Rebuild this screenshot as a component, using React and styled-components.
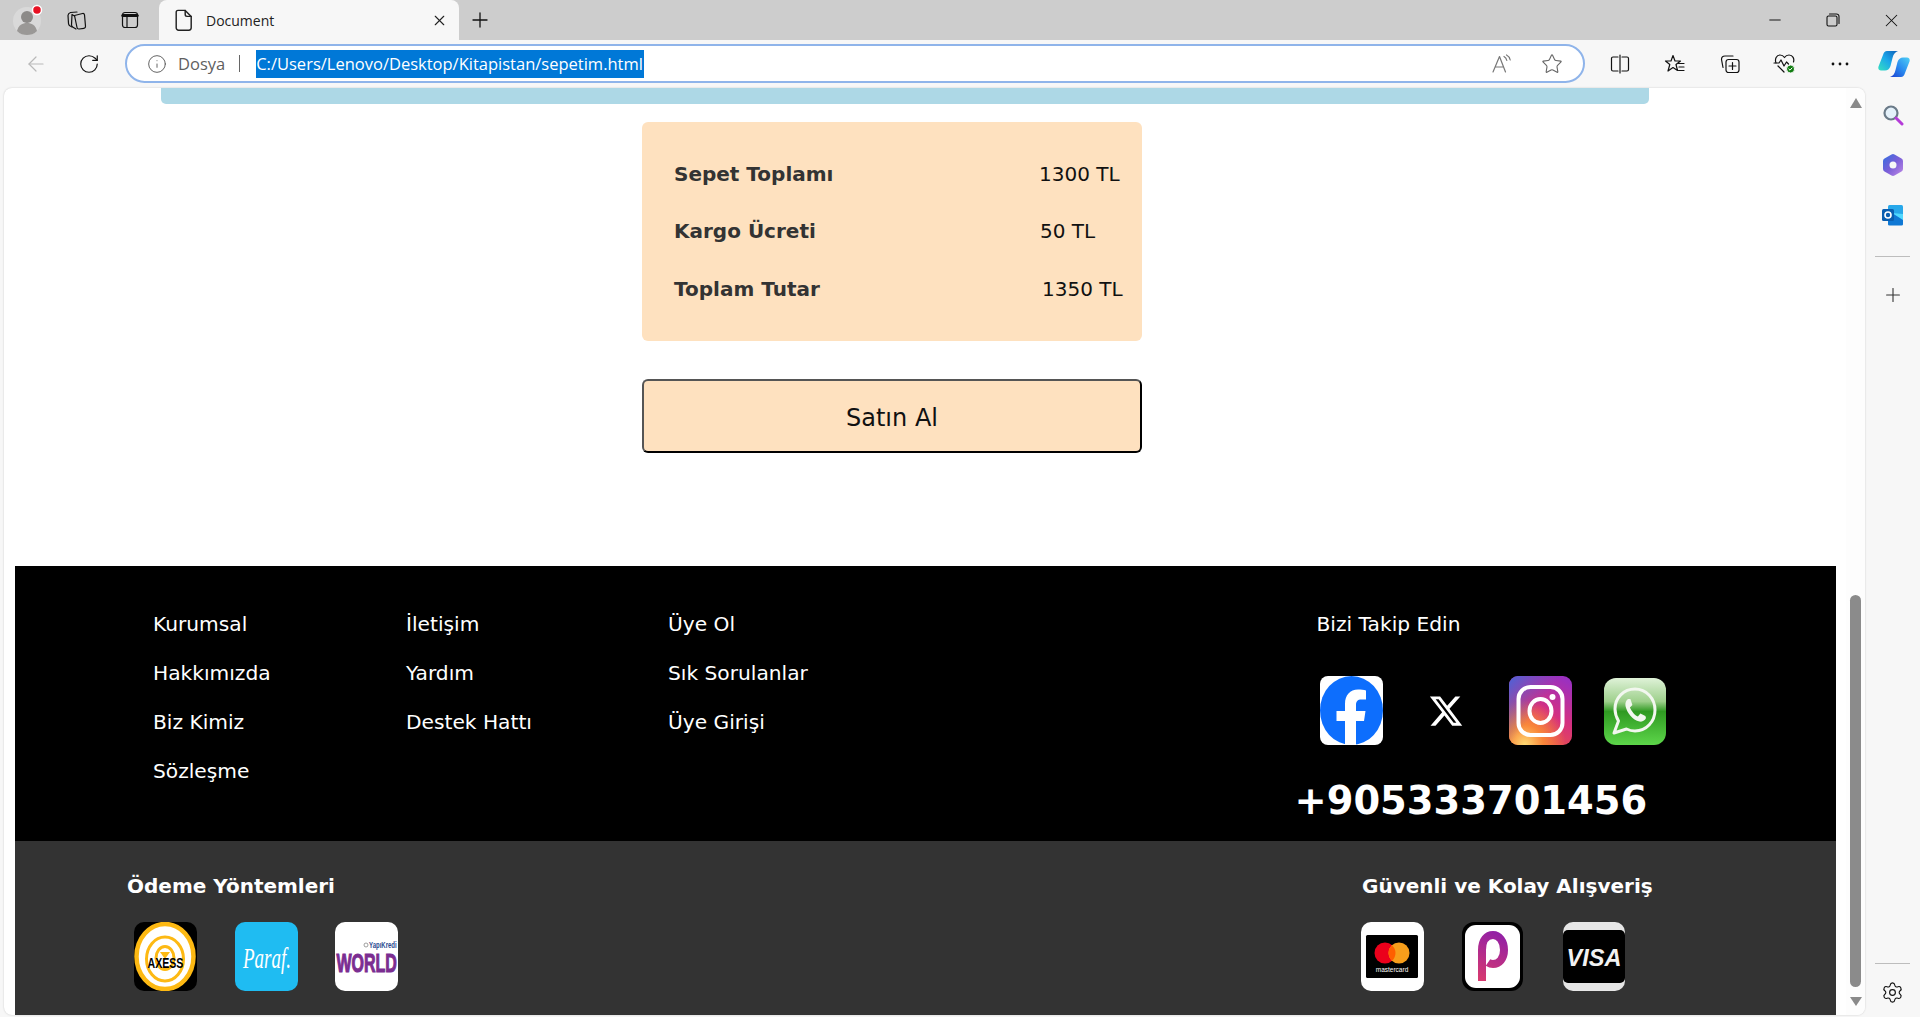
import React from 'react'
import styled, { createGlobalStyle } from 'styled-components'
import { ArrowLeft, RotateCw, Info, Star, X, Plus, Minus, Settings } from 'lucide-react'

const GlobalStyle = createGlobalStyle`
  html, body {
    margin: 0;
    padding: 0;
    height: 100%;
    overflow: hidden;
    background: #f7f7f7;
  }
  * { box-sizing: border-box; }
`

const Shell = styled.div`
  width: 1920px;
  height: 1017px;
  display: flex;
  flex-direction: column;
  font-family: "Open Sans", "Noto Sans", sans-serif;
`

/* browser top */
const TabStrip = styled.div`
  height: 40px;
  background: #cdcdcd;
  display: flex;
  align-items: stretch;
  padding-left: 6px;
`

const Slot = styled.div`
  width: ${p => p.$w || 53}px;
  flex: none;
  display: flex;
  align-items: center;
  justify-content: center;
  color: ${p => p.$color || '#111'};
`

const Tab = styled.div`
  width: 300px;
  margin-left: 2.5px;
  background: #f7f7f7;
  border-radius: 8px 8px 0 0;
  display: flex;
  align-items: center;
  padding-left: 13px;
  padding-right: 11px;
  font-size: 14px;
  color: #222;
`

const TabTitle = styled.span`
  margin-left: 10px;
  flex: 1;
`

const Spacer = styled.div`
  flex: 1;
`

const Toolbar = styled.div`
  height: 48px;
  background: #f7f7f7;
  display: flex;
  align-items: center;
  padding-left: 9.5px;
`

const AddressBar = styled.div`
  width: 1460px;
  height: 39px;
  margin-left: 9.5px;
  margin-right: 7.5px;
  margin-top: -1px;
  border: 2.5px solid #8fb4ea;
  border-radius: 20px;
  background: #fff;
  display: flex;
  align-items: center;
  padding-left: 20px;
  flex: none;
`

const Scheme = styled.span`
  margin-left: 11px;
  color: #5f5f5f;
  font-size: 16.5px;
`

const Bar = styled.span`
  width: 1px;
  height: 17px;
  margin-left: 14px;
  margin-right: 16px;
  background: #666;
`

const SelectedUrl = styled.span`
  background: #0078d7;
  color: #fff;
  height: 28px;
  line-height: 27px;
  width: 388px;
  white-space: nowrap;
  font-size: 16.5px;
  overflow: hidden;
`

/* page and edge sidebar */
const Body = styled.div`
  flex: 1;
  display: flex;
  padding-left: 4px;
  min-height: 0;
`

const Page = styled.div`
  width: 1861px;
  height: 927px;
  background: #fff;
  border-radius: 8px;
  box-shadow: 0 0 2px rgba(0, 0, 0, 0.2);
  display: flex;
  overflow: hidden;
  flex: none;
`

const Content = styled.main`
  flex: 1;
  min-width: 0;
  font-family: "DejaVu Sans", Verdana, sans-serif;
`

const CartBar = styled.div`
  width: 1488px;
  height: 16px;
  margin-left: 157px;
  background: #add8e6;
  border-radius: 0 0 5px 5px;
`

const Summary = styled.section`
  width: 500px;
  margin: 18px 0 0 638px;
  padding: 23px 0 23.5px 32px;
  background: #fee1bf;
  border-radius: 6px;
`

const SummaryRow = styled.div`
  height: 57.5px;
  display: grid;
  grid-template-columns: 365px 1fr;
  align-items: center;
  font-size: 20px;
`

const SummaryLabel = styled.span`
  font-weight: bold;
  color: #333;
`

const SummaryValue = styled.span`
  padding-left: ${p => p.$nudge || 0}px;
  color: #111;
`

const BuyButton = styled.button`
  display: block;
  width: 500px;
  height: 74px;
  margin: 38px 0 0 638px;
  padding-top: 4px;
  background: #fee1bf;
  border: 2px solid;
  border-color: #555 #000 #000 #555;
  border-radius: 6px;
  font-family: inherit;
  font-size: 24px;
  color: #111;
`

const Footer = styled.footer`
  width: 1821px;
  margin: 113px 0 0 11px;
`

const FooterTop = styled.div`
  height: 275px;
  background: #000;
  color: #fff;
  padding: 34px 0 0 138px;
  display: grid;
  grid-template-columns: 253px 262px 626.5px auto;
  font-size: 20.2px;
`

const LinkColumn = styled.div`
  display: flex;
  flex-direction: column;
`

const FooterLink = styled.a`
  height: 49px;
  line-height: 49px;
`

const FollowColumn = styled.div`
  display: flex;
  flex-direction: column;
`

const FollowTitle = styled.div`
  height: 49px;
  line-height: 49px;
  padding-left: 22px;
`

const SocialRow = styled.div`
  display: grid;
  grid-template-columns: repeat(4, 63px);
  column-gap: 31.7px;
  margin: 27px 0 0 25.5px;
  height: 69px;
`

const Phone = styled.div`
  margin-top: 33px;
  height: 46px;
  line-height: 46px;
  font-size: 38.4px;
  font-weight: bold;
`

const FooterBottom = styled.div`
  height: 174px;
  background: #333;
  color: #fff;
  padding: 28px 0 0 112px;
  display: flex;
`

const PayBlock = styled.div`
  width: ${p => p.$w}px;
  flex: none;
`

const PayTitle = styled.h3`
  margin: 0;
  height: 34px;
  line-height: 34px;
  font-size: 20px;
  font-weight: bold;
`

const PayRow = styled.div`
  display: grid;
  grid-template-columns: repeat(3, 63px);
  column-gap: ${p => p.$gap}px;
  margin: 19px 0 0 ${p => p.$indent}px;
`

const Logo = styled.svg`
  display: block;
  width: 63px;
  height: 69px;
`

const Scrollbar = styled.div`
  width: 19px;
  flex: none;
  display: flex;
  flex-direction: column;
  align-items: center;
  background: #fdfdfd;
`

const ArrowUp = styled.div`
  width: 0;
  height: 0;
  margin-top: 10px;
  border-left: 6px solid transparent;
  border-right: 6px solid transparent;
  border-bottom: 10px solid #8a8a8a;
`

const Thumb = styled.div`
  width: 11px;
  height: 392px;
  margin-top: 487px;
  background: #8b8b8b;
  border-radius: 6px;
`

const ArrowDown = styled.div`
  width: 0;
  height: 0;
  margin-top: 10px;
  border-left: 6px solid transparent;
  border-right: 6px solid transparent;
  border-top: 9px solid #8a8a8a;
`

const Sidebar = styled.aside`
  flex: 1;
  display: flex;
  flex-direction: column;
  align-items: center;
  padding: 2px 0 7px;
`

const SideItem = styled.div`
  height: 50px;
  margin-top: ${p => p.$top || 0}px;
  display: flex;
  align-items: center;
  justify-content: center;
`

const SideRule = styled.div`
  width: 35px;
  height: 1px;
  flex: none;
  margin-top: ${p => p.$top || 0}px;
  background: #bdbdbd;
`

const SideBottom = styled.div`
  margin-top: auto;
  display: flex;
  flex-direction: column;
  align-items: center;
`

const SideGear = styled.div`
  height: 36px;
  margin-top: 10px;
  display: flex;
  align-items: center;
  justify-content: center;
`

const XSlot = styled.div`
  display: flex;
  align-items: center;
  justify-content: center;
  height: 69px;
`

const Glyph = ({ size = 20, children, vb = '0 0 20 20', ...rest }) => (
  <svg width={size} height={size} viewBox={vb} fill="none" stroke="currentColor" strokeWidth="1.2" strokeLinecap="round" strokeLinejoin="round" {...rest}>
    {children}
  </svg>
)

const Avatar = () => (
  <svg width="30" height="32" viewBox="0 0 30 32">
    <circle cx="14" cy="17" r="14" fill="#d9d9d9" />
    <circle cx="14" cy="13" r="6" fill="#8c8a88" />
    <path d="M4 27c1.500-6 5.500-8 10-8s8.500 2 10 8c-3 3-6.500 4-10 4s-7-1-10-4z" fill="#9a9896" />
    <circle cx="24" cy="6" r="4.500" fill="#e81123" stroke="#fff" strokeWidth="1.5" />
  </svg>
)

const CollectionsTabs = () => (
  <Glyph size={24} vb="0 0 24 24">
    <path d="M11 7.500 19 5.500c1-.2 1.800.4 2 1.300l1 11.500c.1 1-.6 1.900-1.600 2l-4.800.7c-1 .1-1.900-.5-2.100-1.500L11 7.500z" transform="translate(-1.500 0)" />
    <path d="M9.500 8 7 6.500 6.500 17c.1 1 .6 1.800 1.500 2.300l3 1.700" />
    <path d="M12 4 5.500 4.500C4 5 3 6 3 7.500l.5 8c.1 1 .5 1.800 1.300 2.300L7 19" />
  </Glyph>
)

const VerticalTabs = () => (
  <Glyph size={20}>
    <rect x="2.500" y="2.500" width="15" height="15" rx="2.500" />
    <path d="M2.800 5.500h14.400" strokeWidth="3" />
    <path d="M7 6.500v11" />
  </Glyph>
)

const DocIcon = () => (
  <Glyph size={24} vb="0 0 20 20">
    <path d="M5 2h6l5 5v9.500a2 2 0 0 1-2 2H5.500a2 2 0 0 1-2-2V3.500A1.500 1.500 0 0 1 5 2z" />
    <path d="M11 2v3.500A1.500 1.500 0 0 0 12.500 7H16" />
  </Glyph>
)

const RestoreIcon = () => (
  <Glyph size={14} vb="0 0 14 14" strokeWidth="1.1">
    <rect x="1" y="3" width="10" height="10" rx="1.500" />
    <path d="M3.500 1h7a2.500 2.500 0 0 1 2.500 2.500v7" />
  </Glyph>
)

const ReadAloud = () => (
  <Glyph size={22} vb="0 0 22 22" color="#777">
    <path d="M2 19 8.500 3.500 14.500 19M4.500 14h8" />
    <path d="M13 3.500c1.500.8 2.500 2.400 2.800 4M15.500 2c2 1 3.300 3 3.700 5" />
  </Glyph>
)

const SplitIcon = () => (
  <Glyph size={22} vb="0 0 22 22">
    <path d="M9 4H4a1.500 1.500 0 0 0-1.500 1.500v11A1.500 1.500 0 0 0 4 18h5" />
    <path d="M13 4h5a1.500 1.500 0 0 1 1.500 1.500v11A1.500 1.500 0 0 1 18 18h-5" />
    <path d="M11 2v18" />
  </Glyph>
)

const FavoritesIcon = () => (
  <Glyph size={22} vb="0 0 22 22">
    <path d="m9 2.500 2 5.500h5.500l-4.500 3.500 1.500 6L9 14.500 4 18 5.800 11.500 1.500 8H7z" />
    <path d="M14 10.500h6M15 14h5M14.500 17.500H20" />
  </Glyph>
)

const AddCollection = () => (
  <Glyph size={22} vb="0 0 22 22">
    <rect x="7" y="6.500" width="13" height="13" rx="2.500" />
    <path d="M13.500 9.500v7M10 13h7" />
    <path d="M14 3H6a3.500 3.500 0 0 0-3.500 3.500l1.500 8" />
  </Glyph>
)

const HealthIcon = () => (
  <svg width="24" height="22" viewBox="0 0 24 22" fill="none" stroke="#111" strokeWidth="1.2" strokeLinejoin="round" strokeLinecap="round">
    <path d="M3 10C1.500 6 3.500 2 7 2c2 0 3.500 1 4.500 2.500C12.500 3 14 2 16 2c4 0 5.500 4 4.500 7" />
    <path d="M1 10h5l2-3 3 6 2.500-4 2 2" />
    <path d="M5 13l6 6" />
    <circle cx="17.500" cy="16" r="4" fill="#107c10" stroke="#f7f7f7" strokeWidth="1" />
    <path d="m15.800 16 1.200 1.200 2-2.200" stroke="#fff" strokeWidth="1" />
  </svg>
)

const DotsIcon = () => (
  <svg width="18" height="4" viewBox="0 0 18 4" fill="#111">
    <circle cx="2" cy="2" r="1.400" /><circle cx="9" cy="2" r="1.400" /><circle cx="16" cy="2" r="1.400" />
  </svg>
)

const CopilotIcon = () => (
  <svg width="32" height="28" viewBox="0 0 32 28">
    <defs>
      <linearGradient id="copA" x1="0" y1="1" x2="1" y2="0">
        <stop offset="0" stopColor="#36e0c0" /><stop offset="0.500" stopColor="#1ba7ea" /><stop offset="1" stopColor="#0f5fb8" />
      </linearGradient>
      <linearGradient id="copB" x1="0" y1="1" x2="1" y2="0">
        <stop offset="0" stopColor="#1b3fd0" /><stop offset="0.500" stopColor="#2a8cf0" /><stop offset="1" stopColor="#4fd0f5" />
      </linearGradient>
    </defs>
    <path d="M9 1h11c-3 1-4.500 3-5.500 7l-2 8c-1 3-3 4.500-5.500 4.500H3C1 20.500-.2 19 .5 16.500L5 5C5.800 2.500 7 1 9 1z" fill="url(#copA)" />
    <path d="M23 27H12c3-1 4.500-3 5.500-7l2-8c1-3 3-4.500 5.500-4.500h4c2 0 3.200 1.500 2.500 4L27 23c-.8 2.500-2 4-4 4z" fill="url(#copB)" />
  </svg>
)

const SearchIcon = () => (
  <svg width="22" height="22" viewBox="0 0 22 22" fill="none">
    <circle cx="9" cy="9" r="6.500" fill="#e4f1fa" stroke="#6a7a88" strokeWidth="2.200" />
    <path d="m14 14 6 6" stroke="#b43bd8" strokeWidth="3" strokeLinecap="round" />
  </svg>
)

const M365Icon = () => (
  <svg width="22" height="24" viewBox="0 0 22 24" fill="none">
    <defs>
      <linearGradient id="msA" x1="0" y1="0" x2="1" y2="1">
        <stop offset="0" stopColor="#2f6fe0" /><stop offset="0.500" stopColor="#7a5ed8" /><stop offset="1" stopColor="#c08ae6" />
      </linearGradient>
    </defs>
    <path d="M9.500 1.500a3 3 0 0 1 3 0l7 4a3 3 0 0 1 1.500 2.500v8a3 3 0 0 1-1.500 2.500l-7 4a3 3 0 0 1-3 0l-7-4A3 3 0 0 1 1 16V8a3 3 0 0 1 1.500-2.500z" fill="url(#msA)" />
    <circle cx="11" cy="12" r="3.500" fill="#f7f7f7" />
  </svg>
)

const OutlookIcon = () => (
  <svg width="22" height="22" viewBox="0 0 22 22">
    <rect x="6" y="1" width="15" height="20" rx="1.500" fill="#28a8ea" />
    <path d="M6 10h15v10a1.500 1.500 0 0 1-1.500 1.500H7.500A1.500 1.500 0 0 1 6 20z" fill="#0f78d4" />
    <path d="m10 9 11 7v-6z" fill="#50d9ff" />
    <rect x="0" y="5" width="12" height="12" rx="1.500" fill="#0a5eb0" />
    <circle cx="6" cy="11" r="3" fill="none" stroke="#fff" strokeWidth="1.600" />
  </svg>
)

const FacebookLogo = () => (
  <Logo viewBox="0 0 63 69">
    <rect width="63" height="69" rx="8" fill="#fff" />
    <ellipse cx="31.500" cy="34.500" rx="31.500" ry="34.500" fill="#0d6efd" />
    <path d="M25 69V45H16.500V35H25v-7c0-9 5-14.500 13-14.500 3 0 6 .4 8 .9v9h-4.500c-4 0-5.500 2-5.500 5.500V35h9.500l-1.500 10h-8v24z" fill="#fff" />
  </Logo>
)

const XLogo = () => (
  <svg width="36" height="38" viewBox="0 0 24 24" fill="#fff">
    <path d="M18.244 2.250h3.308l-7.227 8.260 8.502 11.240H16.170l-5.214-6.817L4.990 21.750H1.680l7.730-8.835L1.254 2.250H8.080l4.713 6.231zm-1.161 17.520h1.833L7.084 4.126H5.117z" />
  </svg>
)

const InstagramLogo = () => (
  <Logo viewBox="0 0 63 69">
    <defs>
      <linearGradient id="igBase" x1="0.800" y1="0" x2="0.300" y2="1">
        <stop offset="0" stopColor="#9b30c0" />
        <stop offset="0.500" stopColor="#d6307f" />
        <stop offset="1" stopColor="#ee5a3c" />
      </linearGradient>
      <linearGradient id="igTop" x1="0" y1="0" x2="0.500" y2="0.400">
        <stop offset="0" stopColor="#4a63d8" />
        <stop offset="1" stopColor="#4a63d8" stopOpacity="0" />
      </linearGradient>
      <radialGradient id="igGlow" cx="0.250" cy="1" r="0.650">
        <stop offset="0" stopColor="#ffdb73" />
        <stop offset="0.450" stopColor="#f9873a" />
        <stop offset="1" stopColor="#f9873a" stopOpacity="0" />
      </radialGradient>
    </defs>
    <rect width="63" height="69" rx="9" fill="url(#igBase)" />
    <rect width="63" height="69" rx="9" fill="url(#igGlow)" />
    <rect width="63" height="69" rx="9" fill="url(#igTop)" />
    <rect x="9.500" y="11" width="44" height="48" rx="12" fill="none" stroke="#fff" strokeWidth="4" />
    <ellipse cx="31.500" cy="35" rx="11" ry="12" fill="none" stroke="#fff" strokeWidth="4" />
    <circle cx="43.500" cy="21" r="3" fill="#fff" />
  </Logo>
)

const WhatsappLogo = () => (
  <Logo viewBox="0 0 63 69">
    <defs>
      <linearGradient id="waBase" x1="0" y1="0" x2="0" y2="1">
        <stop offset="0" stopColor="#dff2d8" />
        <stop offset="0.350" stopColor="#9ed08c" />
        <stop offset="0.500" stopColor="#2f9a22" />
        <stop offset="1" stopColor="#5dd64a" />
      </linearGradient>
    </defs>
    <rect y="2" width="62" height="67" rx="12" fill="url(#waBase)" />
    <path d="M31 13c-11.500 0-20 9-20 20 0 4.500 1.500 8.500 3.500 12L10 57l12.500-4c2.800 1.400 5.500 2 8.500 2 11.500 0 20-9.500 20-21S42.500 13 31 13z" fill="none" stroke="#f2f7ef" strokeWidth="3" strokeLinejoin="round" />
    <path d="M24 23c-2 1.500-3 4-2.500 7 1.500 7 7 14 14 15.500 3 .6 5.500-1 6.500-3.500l-.6-2-5-2.500-2.500 3c-3-1-6.500-5.500-8-9l2.500-2.500-2-6z" fill="#f2f7ef" />
  </Logo>
)

const AxessLogo = () => (
  <Logo viewBox="0 0 63 69">
    <rect width="63" height="69" rx="10" fill="#000" />
    <ellipse cx="31" cy="34.500" rx="28.500" ry="32.500" fill="#fff" stroke="#fdb913" strokeWidth="4.500" />
    <ellipse cx="31" cy="37" rx="18.500" ry="22" fill="none" stroke="#fdb913" strokeWidth="3" />
    <ellipse cx="31" cy="36" rx="9" ry="11.500" fill="none" stroke="#fdb913" strokeWidth="3" />
    <path d="M26 30h10l-5 7z" fill="#fdb913" />
    <text transform="translate(13.500 46) scale(1 1.300)" fontFamily="'Liberation Sans', sans-serif" fontSize="10.600" fontWeight="bold" fill="#000">AXESS</text>
  </Logo>
)

const ParafLogo = () => (
  <Logo viewBox="0 0 63 69">
    <rect width="63" height="69" rx="10" fill="#1fbcf2" />
    <text transform="translate(8 46) scale(1 1.550)" fontFamily="'Liberation Serif', serif" fontStyle="italic" fontSize="19" fill="#fff">Paraf.</text>
  </Logo>
)

const WorldLogo = () => (
  <Logo viewBox="0 0 63 69">
    <rect width="63" height="69" rx="10" fill="#fff" />
    <circle cx="31" cy="23" r="2" fill="none" stroke="#888" strokeWidth="0.800" />
    <text transform="translate(34 26) scale(1 1.400)" fontFamily="'Liberation Sans', sans-serif" fontSize="6" fontWeight="bold" fill="#27498f">YapıKredi</text>
    <text transform="translate(1.500 50) scale(1 1.650)" fontFamily="'Liberation Sans', sans-serif" fontSize="16" fontWeight="bold" fill="#7b2d91" stroke="#7b2d91" strokeWidth="0.700">WORLD</text>
  </Logo>
)

const MastercardLogo = () => (
  <Logo viewBox="0 0 63 69">
    <rect width="63" height="69" rx="10" fill="#fff" />
    <rect x="5" y="13" width="52" height="43" rx="1.500" fill="#000" />
    <circle cx="24" cy="31" r="10.500" fill="#eb001b" />
    <circle cx="38" cy="31" r="10.500" fill="#f79e1b" />
    <path d="M31 23.200a10.500 10.500 0 0 1 0 15.600 10.500 10.500 0 0 1 0-15.600z" fill="#ff5f00" />
    <text x="31" y="50" textAnchor="middle" fontFamily="'Liberation Sans', sans-serif" fontSize="6.500" fill="#fff">mastercard</text>
  </Logo>
)

const PapLogo = () => (
  <Logo viewBox="0 0 63 69">
    <defs>
      <linearGradient id="papP" gradientUnits="userSpaceOnUse" x1="38" y1="9" x2="18" y2="59">
        <stop offset="0" stopColor="#8f1fa8" /><stop offset="1" stopColor="#d93a6e" />
      </linearGradient>
    </defs>
    <rect width="61" height="69" rx="12" fill="#000" />
    <rect x="3" y="3" width="55" height="63" rx="11" fill="#fff" />
    <path d="M20 59V28C20 18 25 13 31 13s11 6 11 15-5 14-11 14c-2 0-3.500-.5-5-1.500" fill="none" stroke="url(#papP)" strokeWidth="8" strokeLinecap="butt" />
  </Logo>
)

const VisaLogo = () => (
  <Logo viewBox="0 0 63 69">
    <rect width="62" height="69" rx="10" fill="#e6e6e6" />
    <rect y="8" width="62" height="53" rx="5" fill="#000" />
    <text x="31" y="44" textAnchor="middle" fontFamily="'Liberation Sans', sans-serif" fontStyle="italic" fontWeight="bold" fontSize="23.500" fill="#f2f2f2">VISA</text>
  </Logo>
)

const linkColumns = [
  ['Kurumsal', 'Hakkımızda', 'Biz Kimiz', 'Sözleşme'],
  ['İletişim', 'Yardım', 'Destek Hattı'],
  ['Üye Ol', 'Sık Sorulanlar', 'Üye Girişi'],
]

const totals = [
  { label: 'Sepet Toplamı', value: '1300 TL', nudge: 0 },
  { label: 'Kargo Ücreti', value: '50 TL', nudge: 1 },
  { label: 'Toplam Tutar', value: '1350 TL', nudge: 3 },
]

const App = () => (
  <Shell>
    <GlobalStyle />
    <TabStrip>
      <Slot $w={44.5}><Avatar /></Slot>
      <Slot><CollectionsTabs /></Slot>
      <Slot><VerticalTabs /></Slot>
      <Tab>
        <DocIcon />
        <TabTitle>Document</TabTitle>
        <X size={17} strokeWidth={1.6} />
      </Tab>
      <Slot $w={42}><Plus size={24} strokeWidth={1.3} /></Slot>
      <Spacer />
      <Slot $w={58}><Minus size={18} strokeWidth={1.3} /></Slot>
      <Slot $w={58}><RestoreIcon /></Slot>
      <Slot $w={58}><X size={21} strokeWidth={1.2} /></Slot>
    </TabStrip>

    <Toolbar>
      <Slot $color="#b9b9b9"><ArrowLeft size={24} strokeWidth={1.2} /></Slot>
      <Slot><RotateCw size={22} strokeWidth={1.3} /></Slot>
      <AddressBar>
        <Info size={20} strokeWidth={1.1} color="#555" />
        <Scheme>Dosya</Scheme>
        <Bar />
        <SelectedUrl>C:/Users/Lenovo/Desktop/Kitapistan/sepetim.html</SelectedUrl>
        <Spacer />
        <Slot $w={50}><ReadAloud /></Slot>
        <Slot $w={50} $color="#666"><Star size={22} strokeWidth={1.2} /></Slot>
        <Slot $w={6} />
      </AddressBar>
      <Slot $w={55}><SplitIcon /></Slot>
      <Slot $w={55}><FavoritesIcon /></Slot>
      <Slot $w={55}><AddCollection /></Slot>
      <Slot $w={55}><HealthIcon /></Slot>
      <Slot $w={55}><DotsIcon /></Slot>
      <Slot $w={52}><CopilotIcon /></Slot>
    </Toolbar>

    <Body>
      <Page>
        <Content>
          <CartBar />
          <Summary>
            {totals.map(row => (
              <SummaryRow key={row.label}>
                <SummaryLabel>{row.label}</SummaryLabel>
                <SummaryValue $nudge={row.nudge}>{row.value}</SummaryValue>
              </SummaryRow>
            ))}
          </Summary>
          <BuyButton>Satın Al</BuyButton>

          <Footer>
            <FooterTop>
              {linkColumns.map((links, i) => (
                <LinkColumn key={i}>
                  {links.map(text => <FooterLink key={text}>{text}</FooterLink>)}
                </LinkColumn>
              ))}
              <FollowColumn>
                <FollowTitle>Bizi Takip Edin</FollowTitle>
                <SocialRow>
                  <FacebookLogo />
                  <XSlot><XLogo /></XSlot>
                  <InstagramLogo />
                  <WhatsappLogo />
                </SocialRow>
                <Phone>+905333701456</Phone>
              </FollowColumn>
            </FooterTop>
            <FooterBottom>
              <PayBlock $w={1235}>
                <PayTitle>Ödeme Yöntemleri</PayTitle>
                <PayRow $gap={37.5} $indent={7}>
                  <AxessLogo />
                  <ParafLogo />
                  <WorldLogo />
                </PayRow>
              </PayBlock>
              <PayBlock $w={400}>
                <PayTitle>Güvenli ve Kolay Alışveriş</PayTitle>
                <PayRow $gap={38} $indent={-1}>
                  <MastercardLogo />
                  <PapLogo />
                  <VisaLogo />
                </PayRow>
              </PayBlock>
            </FooterBottom>
          </Footer>
        </Content>
        <Scrollbar>
          <ArrowUp />
          <Thumb />
          <ArrowDown />
        </Scrollbar>
      </Page>
      <Sidebar>
        <SideItem><SearchIcon /></SideItem>
        <SideItem><M365Icon /></SideItem>
        <SideItem><OutlookIcon /></SideItem>
        <SideRule $top={16} />
        <SideItem $top={13}><Plus size={22} strokeWidth={1.2} color="#333" /></SideItem>
        <SideBottom>
          <SideRule />
          <SideGear><Settings size={23} strokeWidth={1.2} color="#111" /></SideGear>
        </SideBottom>
      </Sidebar>
    </Body>
  </Shell>
)

export default App
